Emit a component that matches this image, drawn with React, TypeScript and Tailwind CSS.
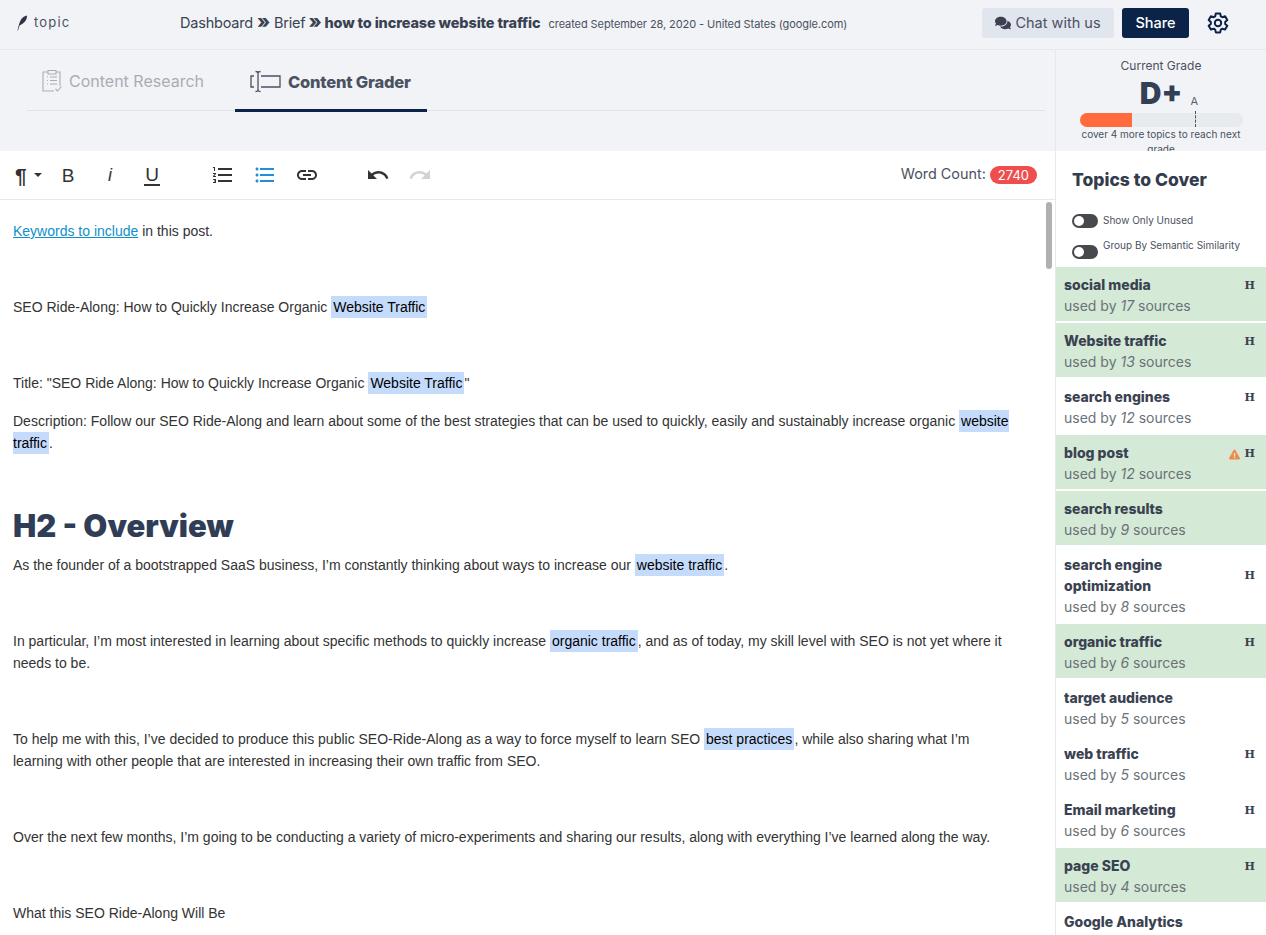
import React from 'react';
import { FaComments, FaExclamationTriangle } from 'react-icons/fa';
import { MdFormatListBulleted, MdFormatListNumbered, MdLink, MdRedo, MdUndo } from 'react-icons/md';

const topics = [
  { name: ['social media'], count: '17', green: true, h: true },
  { name: ['Website traffic'], count: '13', green: true, h: true },
  { name: ['search engines'], count: '12', h: true },
  { name: ['blog post'], count: '12', green: true, h: true, warn: true },
  { name: ['search results'], count: '9', green: true },
  { name: ['search engine', 'optimization'], count: '8', h: true },
  { name: ['organic traffic'], count: '6', green: true, h: true },
  { name: ['target audience'], count: '5' },
  { name: ['web traffic'], count: '5', h: true },
  { name: ['Email marketing'], count: '6', h: true },
  { name: ['page SEO'], count: '4', green: true, h: true },
  { name: ['Google Analytics'], count: '4' },
];

const Mark = ({ children }: { children: React.ReactNode }) => (
  <span className="bg-[#c5dbfb] text-black px-[2px] py-[3px]">{children}</span>
);

const Para = ({ children }: { children?: React.ReactNode }) => (
  <p className="mb-4 min-h-[22px] leading-[22px]">{children}</p>
);

const Toggle = () => (
  <div className="w-[26px] h-[14px] rounded-full bg-[#47494d] shrink-0 flex items-center px-[2px]">
    <div className="size-[10px] rounded-full bg-white" />
  </div>
);

const ToolBtn = ({ children, className = '' }: { children: React.ReactNode; className?: string }) => (
  <div className={`w-[42px] h-[24px] flex items-center justify-center shrink-0 ${className}`}>{children}</div>
);

export default function App() {
  return (
    <div className="w-[1266px] h-[935px] overflow-hidden bg-white text-[#333] font-['Inter',sans-serif]">
      {/* top nav */}
      <div className="h-[50px] bg-[#f1f3f7] border-b border-[#e6e8ec] flex items-center pb-[4px]">
        <div className="w-[180px] pl-[17px] flex items-center gap-[6px] text-[#4a5160]">
          <svg width="11" height="16" viewBox="0 0 11 16" fill="#2d3442">
            <path d="M0.500 15.500 C1.500 11 2.500 7 4 4.500 C5.500 2.300 8 0.800 10 0.500 C10 3 9.300 5 8 6.500 C6.500 8.500 4 9.500 2.600 10.500 C2 12 1.500 14 1 15.500 Z" />
          </svg>
          <span className="text-[13px] tracking-[1.200px]">topic</span>
        </div>
        <div className="flex items-baseline text-[14.500px] text-[#3a4252] tracking-[-0.2px]">
          <span>Dashboard</span>
          <span className="mx-[4px] text-[19px] leading-none font-extrabold">»</span>
          <span>Brief</span>
          <span className="mx-[3px] text-[19px] leading-none font-extrabold">»</span>
          <span className="font-extrabold tracking-[-0.14px]">how to increase website traffic</span>
          <span className="ml-[8px] text-[11px] text-[#4a5160] tracking-[-0.08px]">created September 28, 2020 - United States (google.com)</span>
        </div>
        <div className="ml-auto flex items-center mr-[36px]">
          <button className="w-[132px] h-[30px] rounded-[3px] bg-[#e1e5ee] text-[14.500px] text-[#4a5160] flex items-center justify-center gap-[4px]">
            <FaComments className="size-[16px] text-[#3a4252]" />
            Chat with us
          </button>
          <button className="ml-[8px] w-[67px] h-[30px] rounded-[3px] bg-[#0b2348] text-white text-[14.500px] font-medium">Share</button>
          <svg className="ml-[17px] text-[#0b2348]" width="24" height="24" viewBox="0 0 24 24" fill="none" stroke="currentColor" strokeWidth="2" strokeLinejoin="round">
            <path d="M9.800 2.500h4.400l.6 2.800 1.600.9 2.700-.9 2.200 3.800-2.100 1.900v1.900l2.100 1.900-2.200 3.800-2.700-.9-1.600.9-.6 2.800H9.800l-.6-2.800-1.600-.9-2.700.9-2.200-3.800 2.100-1.900v-1.900L2.700 9.100l2.200-3.800 2.700.9 1.600-.9z" />
            <circle cx="12" cy="12" r="3.200" />
          </svg>
        </div>
      </div>

      <div className="flex h-[885px]">
        {/* main column */}
        <div className="w-[1055px] flex flex-col">
          <div className="h-[101px] bg-[#f1f3f7] pl-[27px] pr-[10px] shrink-0">
            <div className="h-[61px] border-b border-[#dfe2e6] flex">
              <div className="w-[208px] flex items-center gap-[6px] pl-[14px] pt-[2px] text-[#a9adb3] text-[16px]">
                <svg width="22" height="24" viewBox="0 0 22 24" fill="none" stroke="currentColor" strokeWidth="1.100">
                  <path d="M7 3H2v19h11M15 3h4v14M7 1.500h8V5H7zM6 8h1M6 11.500h1M6 15h1M9 8h7M9 11.500h7M9 15h7M14.500 20l2 2 4-4.500" />
                </svg>
                Content Research
              </div>
              <div className="w-[192px] h-[62px] border-b-[3px] border-[#0b2348] flex items-center gap-[7px] pl-[15px] pt-[5px] text-[#4a5160] font-extrabold text-[16.500px] tracking-[-0.2px]">
                <svg width="31" height="24" viewBox="0 0 31 24" fill="none" stroke="currentColor" strokeWidth="1.300">
                  <path d="M4 6H1v11h3M11 6h19v11H11M5.500 1.500c1.500 0 2.500.5 2.500 1.500v17c0 1-1 1.500-2.500 1.500M10.500 1.500C9 1.500 8 2 8 3M10.500 21.500C9 21.500 8 21 8 20" />
                </svg>
                Content Grader
              </div>
            </div>
          </div>

          {/* toolbar */}
          <div className="h-[49px] border-b border-[#e8e8e8] flex items-center text-[#333] shrink-0 pl-[15px]">
            <div className="w-[32px] flex items-center">
              <span className="text-[21px] font-['Liberation_Sans',sans-serif] font-bold leading-none">¶</span>
              <div className="ml-[7px] w-0 h-0 border-x-[4px] border-x-transparent border-t-[4px] border-t-[#333]" />
            </div>
            <ToolBtn><span className="text-[19px] leading-none font-['Liberation_Sans',sans-serif]">B</span></ToolBtn>
            <ToolBtn><span className="text-[18px] leading-none italic font-['Liberation_Sans',sans-serif]">i</span></ToolBtn>
            <ToolBtn><span className="text-[19px] leading-[19px] border-b-2 border-[#333] px-[1px] font-['Liberation_Sans',sans-serif]">U</span></ToolBtn>
            <ToolBtn className="ml-[29px]"><MdFormatListNumbered className="size-[24px]" /></ToolBtn>
            <ToolBtn><MdFormatListBulleted className="size-[24px] text-[#1f8fdc]" /></ToolBtn>
            <ToolBtn><MdLink className="size-[24px]" /></ToolBtn>
            <ToolBtn className="ml-[29px]"><MdUndo className="size-[24px]" /></ToolBtn>
            <ToolBtn><MdRedo className="size-[24px] text-[#cfd2d6]" /></ToolBtn>
            <div className="ml-auto mr-[18px] flex items-center gap-[4px] text-[14.400px] text-[#4a5160]">
              <span className="-mt-[2px]">Word Count:</span>
              <span className="h-[18px] px-[8px] rounded-full bg-[#f04e4e] text-white text-[13px] leading-[18px]">2740</span>
            </div>
          </div>

          {/* editor */}
          <div className="relative flex-1 overflow-hidden pl-[13px] pr-[38px] pt-[20px] text-[14px] text-[#333] font-['Liberation_Sans',sans-serif]">
            <Para><a className="text-[#0e90c9] underline">Keywords to include</a> in this post.</Para>
            <Para />
            <Para>SEO Ride-Along: How to Quickly Increase Organic <Mark>Website Traffic</Mark></Para>
            <Para />
            <Para>Title: "SEO Ride Along: How to Quickly Increase Organic <Mark>Website Traffic</Mark>"</Para>
            <Para>Description: Follow our SEO Ride-Along and learn about some of the best strategies that can be used to quickly, easily and sustainably increase organic <Mark>website traffic</Mark>.</Para>
            <Para />
            <h2 className="h-[36px] mb-[10px] text-[31px] leading-[36px] font-black text-[#2f3e56] font-['Inter',sans-serif]">H2 - Overview</h2>
            <Para>As the founder of a bootstrapped SaaS business, I’m constantly thinking about ways to increase our <Mark>website traffic</Mark>.</Para>
            <Para />
            <Para>In particular, I’m most interested in learning about specific methods to quickly increase <Mark>organic traffic</Mark>, and as of today, my skill level with SEO is not yet where it needs to be.</Para>
            <Para />
            <Para>To help me with this, I’ve decided to produce this public SEO-Ride-Along as a way to force myself to learn SEO <Mark>best practices</Mark>, while also sharing what I’m learning with other people that are interested in increasing their own traffic from SEO.</Para>
            <Para />
            <Para>Over the next few months, I’m going to be conducting a variety of micro-experiments and sharing our results, along with everything I’ve learned along the way.</Para>
            <Para />
            <Para>What this SEO Ride-Along Will Be</Para>
            <div className="absolute right-[3px] top-[2px] w-[6px] h-[67px] rounded-full bg-[#b0b0b0]" />
          </div>
        </div>

        {/* right column */}
        <div className="flex-1 border-l border-[#e6e8ec] flex flex-col overflow-hidden">
          <div className="h-[101px] shrink-0 bg-[#f1f3f7] overflow-hidden flex flex-col items-center pt-[9px] text-[#4a5160]">
            <div className="text-[12px] leading-[14px] shrink-0">Current Grade</div>
            <div className="mt-[5px] text-[30px] leading-[30px] font-black text-[#333f55] shrink-0">D+</div>
            <div className="relative w-[163px] h-[14px] mt-[5px] rounded-full bg-[#e8ebee] shrink-0">
              <div className="w-[52px] h-full rounded-full rounded-r-none bg-[#ff6b3d]" />
              <div className="absolute left-[111px] -top-[18px] text-[11px] leading-[12px] text-[#5a6270]">A</div>
              <div className="absolute left-[115px] -top-[2px] h-[16px] border-l border-dashed border-[#4a5160]" />
            </div>
            <div className="w-[170px] text-center text-[10px] leading-[15px] shrink-0">cover 4 more topics to reach next grade</div>
          </div>

          <div className="pl-[16px] pt-[18px] h-[116px] shrink-0 text-[#4a5160]">
            <div className="text-[17.500px] font-extrabold text-[#333c4d] leading-[22px]">Topics to Cover</div>
            <div className="mt-[22px] flex items-center gap-[5px] text-[10px]"><Toggle />Show Only Unused</div>
            <div className="mt-[11px] flex items-start gap-[5px] text-[10px] leading-[12px]"><div className="mt-[6px]"><Toggle /></div>Group By Semantic Similarity</div>
          </div>

          <div className="flex flex-col gap-[2px]">
            {topics.map((t) => (
              <div key={t.name[0]} className={`${t.green ? 'bg-[#d4e9d6]' : 'bg-white'} flex items-center pl-[8px] pr-[11px] pt-[7px] pb-[5px] shrink-0`}>
                <div className="flex-1 min-w-0">
                  {t.name.map((n) => (
                    <div key={n} className="text-[14px] leading-[21px] font-extrabold text-[#3a4252]">{n}</div>
                  ))}
                  <div className="text-[14px] leading-[21px] text-[#6a7278]">used by <i>{t.count}</i> sources</div>
                </div>
                {t.warn && <FaExclamationTriangle className="size-[11px] text-[#f08a4b] mr-[5px] -mt-[18px]" />}
                {t.h && <span className="text-[11px] font-bold text-[#3a4252] font-['DejaVu_Serif',serif] -mt-[18px]">H</span>}
              </div>
            ))}
          </div>
        </div>
      </div>
    </div>
  );
}
